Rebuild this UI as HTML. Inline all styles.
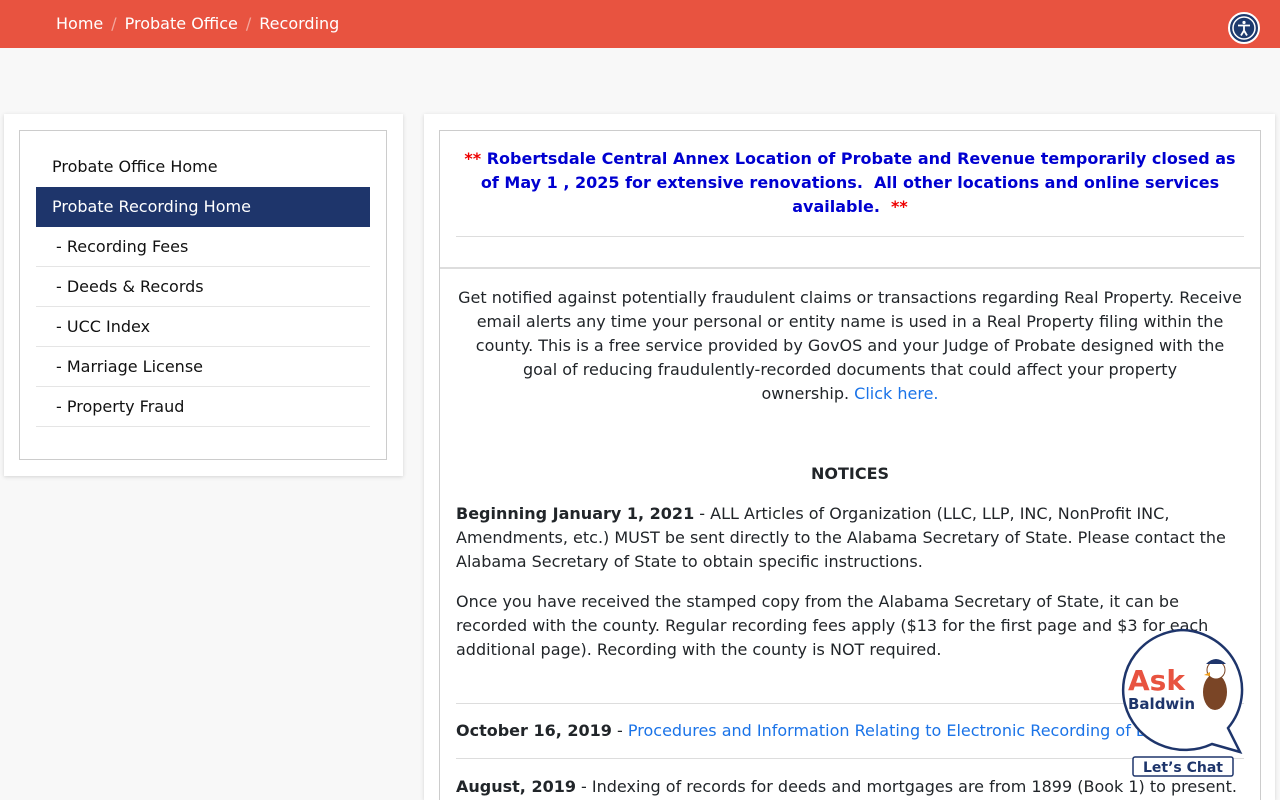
<!DOCTYPE html>
<html><head><style>
*{box-sizing:border-box;margin:0;padding:0}
html,body{width:1280px;height:800px;overflow:hidden}
body{background:#f8f8f8;font-family:"DejaVu Sans","Liberation Sans",sans-serif;font-size:16px;color:#212529;position:relative}
.top{height:48px;background:#e85340;color:#fff;padding-left:56px;line-height:47px;font-size:16px}
.top .s{color:#f3a79d;margin:0 8px}
.acc{position:absolute;right:20px;top:12px;width:32px;height:32px;border-radius:50%;background:#1d3a6e;border:2px solid #fff}
.lc{position:absolute;left:4px;top:114px;width:399px;height:362px;background:#fff;box-shadow:0 1px 4px rgba(0,0,0,.15)}
.lc .in{position:absolute;left:15px;top:16px;width:368px;height:330px;border:1px solid #ccc}
.nav{position:absolute;left:16px;top:16px;width:334px}
.nav div{height:40px;line-height:40px;padding-left:16px;color:#111}
.nav .a{background:#1e356b;color:#fff}
.nav .b{border-bottom:1px solid #e5e5e5;padding-left:20px}
.rc{position:absolute;left:424px;top:114px;width:851px;height:686px;background:#fff;box-shadow:0 1px 4px rgba(0,0,0,.15);overflow:hidden}
.rc .in{position:absolute;left:15px;top:16px;width:822px;height:700px;border:1px solid #ccc;border-bottom:0}
.ban{margin:0 16px;padding:16px 0 17px;border-bottom:1px solid #ddd;text-align:center;color:#0000d0;font-weight:bold;line-height:24px}
.ban i{color:#e00;font-style:normal}
.sep{border-bottom:2px solid #ddd;height:32px}
.p{padding:0 16px;line-height:24px}
a{color:#1a73e8;text-decoration:none}
hr{border:0;border-top:1px solid #ddd;margin:0 16px}
</style></head><body>
<div class="top">Home<span class="s">/</span>Probate Office<span class="s">/</span>Recording</div>
<div class="acc"><svg width="28" height="28" viewBox="0 0 28 28"><circle cx="14" cy="14" r="11" fill="none" stroke="#fff" stroke-width="1.5"/><circle cx="14" cy="8.5" r="1.6" fill="#fff"/><path d="M8 11.5h12M14 11.5v5M14 16.5l-3 5M14 16.5l3 5" stroke="#fff" stroke-width="1.8" fill="none"/></svg></div>
<div class="lc"><div class="in"><div class="nav">
<div>Probate Office Home</div><div class="a">Probate Recording Home</div>
<div class="b">- Recording Fees</div><div class="b">- Deeds &amp; Records</div><div class="b">- UCC Index</div><div class="b">- Marriage License</div><div class="b">- Property Fraud</div>
</div></div></div>
<div class="rc"><div class="in">
<div class="ban"><i>**</i> Robertsdale Central Annex Location of Probate and Revenue temporarily closed as of May 1 , 2025 for extensive renovations.&nbsp; All other locations and online services available.&nbsp; <i>**</i></div>
<div class="sep"></div>
<div class="p" style="text-align:center;margin-top:17px;padding:0 18px">Get notified against potentially fraudulent claims or transactions regarding Real Property. Receive email alerts any time your personal or entity name is used in a Real Property filing within the county. This is a free service provided by GovOS and your Judge of Probate designed with the goal of reducing fraudulently-recorded documents that could affect your property ownership.&nbsp;<a>Click&nbsp;here.</a></div>
<div class="p" style="text-align:center;font-weight:bold;margin-top:56px">NOTICES</div>
<div class="p" style="margin-top:16px"><b>Beginning January 1, 2021</b> - ALL Articles of Organization (LLC, LLP, INC, NonProfit INC, Amendments, etc.) MUST be sent directly to the Alabama Secretary of State. Please contact the Alabama Secretary of State to obtain specific instructions.</div>
<div class="p" style="margin-top:16px">Once you have received the stamped copy from the Alabama Secretary of State, it can be recorded with the county. Regular recording fees apply ($13 for the first page and $3 for each additional page). Recording with the county is NOT required.</div>
<hr style="margin-top:41px">
<div class="p" style="margin-top:15px;white-space:nowrap"><b>October 16, 2019</b> - <a>Procedures and Information Relating to Electronic Recording of Documents</a></div>
<hr style="margin-top:15px">
<div class="p" style="margin-top:16px"><b>August, 2019</b> - Indexing of records for deeds and mortgages are from 1899 (Book 1) to present.</div>
</div></div>
<svg style="position:absolute;left:1118px;top:628px" width="130" height="150" viewBox="0 0 130 150">
<path d="M64 2a62 60 0 1 0 30 114l28 8-12-24A62 60 0 0 0 64 2z" fill="#fff" stroke="#1e356b" stroke-width="2.5"/>
<text x="10" y="62" font-family="DejaVu Sans" font-weight="bold" font-size="28" fill="#e85340">Ask</text>
<text x="10" y="81" font-family="DejaVu Sans" font-weight="bold" font-size="15" fill="#1e356b">Baldwin</text>
<ellipse cx="97" cy="64" rx="12" ry="18" fill="#7a4526"/><circle cx="98" cy="42" r="9" fill="#fff" stroke="#7a4526"/><path d="M88 36q10-10 20 0z" fill="#1e356b"/><path d="M92 44l-6 3 6 1z" fill="#f0a020"/>
<rect x="15" y="129" width="100" height="19" rx="2" fill="#fff" stroke="#1e356b" stroke-width="1.5"/>
<text x="65" y="144" text-anchor="middle" font-family="DejaVu Sans" font-weight="bold" font-size="14" fill="#1e356b">Let’s Chat</text>
</svg>
</body></html>
